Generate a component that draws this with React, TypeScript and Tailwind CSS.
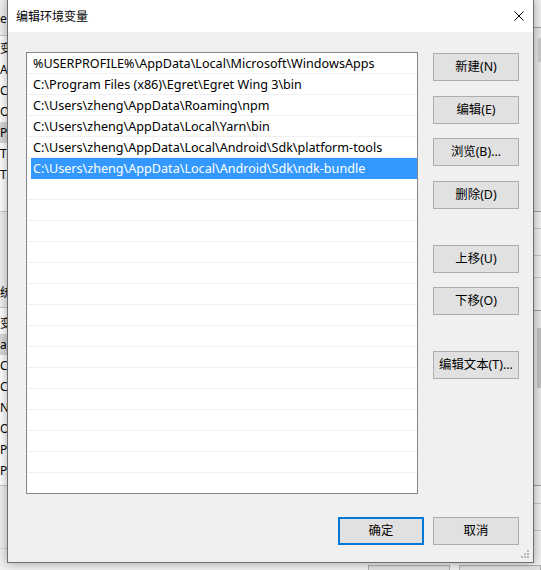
import React from 'react';

const paths = [
  '%USERPROFILE%\\AppData\\Local\\Microsoft\\WindowsApps',
  'C:\\Program Files (x86)\\Egret\\Egret Wing 3\\bin',
  'C:\\Users\\zheng\\AppData\\Roaming\\npm',
  'C:\\Users\\zheng\\AppData\\Local\\Yarn\\bin',
  'C:\\Users\\zheng\\AppData\\Local\\Android\\Sdk\\platform-tools',
  'C:\\Users\\zheng\\AppData\\Local\\Android\\Sdk\\ndk-bundle',
];

const selected = 5;
const rowCount = 21;

const sideButtons = [
  { label: '新建(N)', mt: 'mt-[1px]' },
  { label: '编辑(E)', mt: 'mt-[15px]' },
  { label: '浏览(B)...', mt: 'mt-[14px]' },
  { label: '删除(D)', mt: 'mt-[15px]' },
  { label: '上移(U)', mt: 'mt-[36px]' },
  { label: '下移(O)', mt: 'mt-[14px]' },
  { label: '编辑文本(T)...', mt: 'mt-[36px]' },
];

// what peeks out from the windows behind the dialog
const leftTop = ['变', 'Al', 'Cl', 'O', 'Pa', 'TE', 'TM'];
const leftBottom = ['变', 'as', 'Cl', 'Co', 'N', 'O', 'Pa', 'PA'];

const WinButton: React.FC<{ label: string; primary?: boolean; className?: string }> = ({
  label,
  primary,
  className = '',
}) => (
  <div
    className={`w-[86px] h-[28px] flex items-center justify-center bg-[#e1e1e1] text-[12.4px] text-black ${
      primary ? 'border-2 border-[#0078d7]' : 'border border-[#adadad]'
    } ${className}`}
  >
    {label}
  </div>
);

export default function App() {
  const rows = Array.from({ length: rowCount }).map((_, i) => paths[i] ?? '');

  return (
    <div className="relative w-[541px] h-[570px] overflow-hidden bg-[#f0f0f0] font-['Noto_Sans','Noto_Sans_CJK_SC',sans-serif] text-black">
      {/* background window, left edge */}
      <div className="absolute left-0 top-0 w-[7px] h-full overflow-hidden text-[12px] leading-[21px] whitespace-nowrap">
        <div className="h-[35px] pt-[8px]">er</div>
        <div className="border-t border-[#c8c8c8] bg-white h-[176px] pt-[2px]">
          {leftTop.map((t, i) => (
            <div key={i} className={`h-[21px] ${i === 4 ? 'bg-[#d9d9d9]' : ''}`}>
              {t}
            </div>
          ))}
        </div>
        <div className="border-t border-[#c8c8c8] h-[96px] flex items-end pb-[4px]">统</div>
        <div className="border-t border-[#c8c8c8] bg-white h-[178px] pt-[5px]">
          {leftBottom.map((t, i) => (
            <div key={i} className={`h-[21px] ${i === 1 ? 'bg-[#d9d9d9]' : ''}`}>
              {t}
            </div>
          ))}
        </div>
        <div className="border-t border-[#c8c8c8] h-[63px]" />
        <div className="border-t border-[#d8d8d8]" />
      </div>

      {/* background window, right edge */}
      <div className="absolute left-[534px] top-0 w-[7px] h-full bg-[#f0f0f0]">
        <div className="h-[27px]" />
        <div className="border-t border-[#a0a0a0] h-[184px] bg-[#e8e8e8] flex justify-end">
          <div className="w-[3px] mt-[10px] h-[24px] bg-[#cdcdcd]" />
        </div>
        <div className="border-t border-[#a0a0a0] h-[17px]" />
        <div className="border-t border-[#c8c8c8] h-[27px]" />
        <div className="border-t border-[#c8c8c8] h-[22px]" />
        <div className="border-t border-[#c8c8c8] h-[33px]" />
        <div className="border-t border-[#a0a0a0] h-[175px] bg-[#e8e8e8] flex justify-end">
          <div className="w-[4px] mt-[17px] h-[60px] bg-[#c1c1c1]" />
        </div>
        <div className="border-t border-[#a0a0a0] h-[18px]" />
        <div className="border-t border-[#c8c8c8] h-[27px]" />
        <div className="border-t border-[#c8c8c8]" />
      </div>

      {/* background window, buttons under the dialog */}
      <div className="absolute left-0 top-[565px] w-full flex">
        <div className="ml-[368px] w-[86px] h-[10px] border border-[#adadad] bg-[#e1e1e1]" />
        <div className="ml-[9px] w-[86px] h-[10px] border border-[#adadad] bg-[#e1e1e1]" />
      </div>

      {/* dialog */}
      <div className="absolute left-[7px] top-[-1px] w-[527px] h-[564px] border border-[#6f6f6f] bg-[#f0f0f0] shadow-[0_0_10px_rgba(0,0,0,0.35)] flex flex-col">
        <div className="h-[32px] shrink-0 bg-white flex items-center justify-between pl-[8px] pr-[9px]">
          <span className="text-[12px] font-['Noto_Sans_CJK_SC',sans-serif]">编辑环境变量</span>
          <svg width="10" height="10" viewBox="0 0 10 10" className="mt-[-1px]">
            <path d="M0.5 0.5 L9.5 9.5 M9.5 0.5 L0.5 9.5" stroke="#000" strokeWidth="1" fill="none" />
          </svg>
        </div>

        <div className="flex pt-[20px]">
          <div className="ml-[18px] w-[392px] h-[442px] border border-[#828790] bg-white overflow-hidden">
            {rows.map((p, i) => (
              <div
                key={i}
                className={`h-[21px] text-[12.6px] leading-[20px] whitespace-nowrap ${
                  i === selected ? '' : 'border-b border-[#f0f0f0]'
                }`}
              >
                <div
                  className={`ml-[4px] h-full pl-[2px] pt-[1px] ${
                    i === selected ? 'bg-[#3399ff] text-white' : ''
                  }`}
                >
                  {p}
                </div>
              </div>
            ))}
          </div>

          <div className="ml-[15px] flex flex-col">
            {sideButtons.map((b) => (
              <WinButton key={b.label} label={b.label} className={b.mt} />
            ))}
          </div>
        </div>

        <div className="flex mt-[23px] ml-[330px] gap-[9px]">
          <WinButton label="确定" primary />
          <WinButton label="取消" />
        </div>

        <svg width="9" height="9" viewBox="0 0 9 9" className="absolute right-[3px] bottom-[3px]">
          <rect x="6" y="0" width="2" height="2" fill="#b9b9b9" />
          <rect x="3" y="3" width="2" height="2" fill="#b9b9b9" />
          <rect x="6" y="3" width="2" height="2" fill="#b9b9b9" />
          <rect x="0" y="6" width="2" height="2" fill="#b9b9b9" />
          <rect x="3" y="6" width="2" height="2" fill="#b9b9b9" />
          <rect x="6" y="6" width="2" height="2" fill="#b9b9b9" />
        </svg>
      </div>
    </div>
  );
}
